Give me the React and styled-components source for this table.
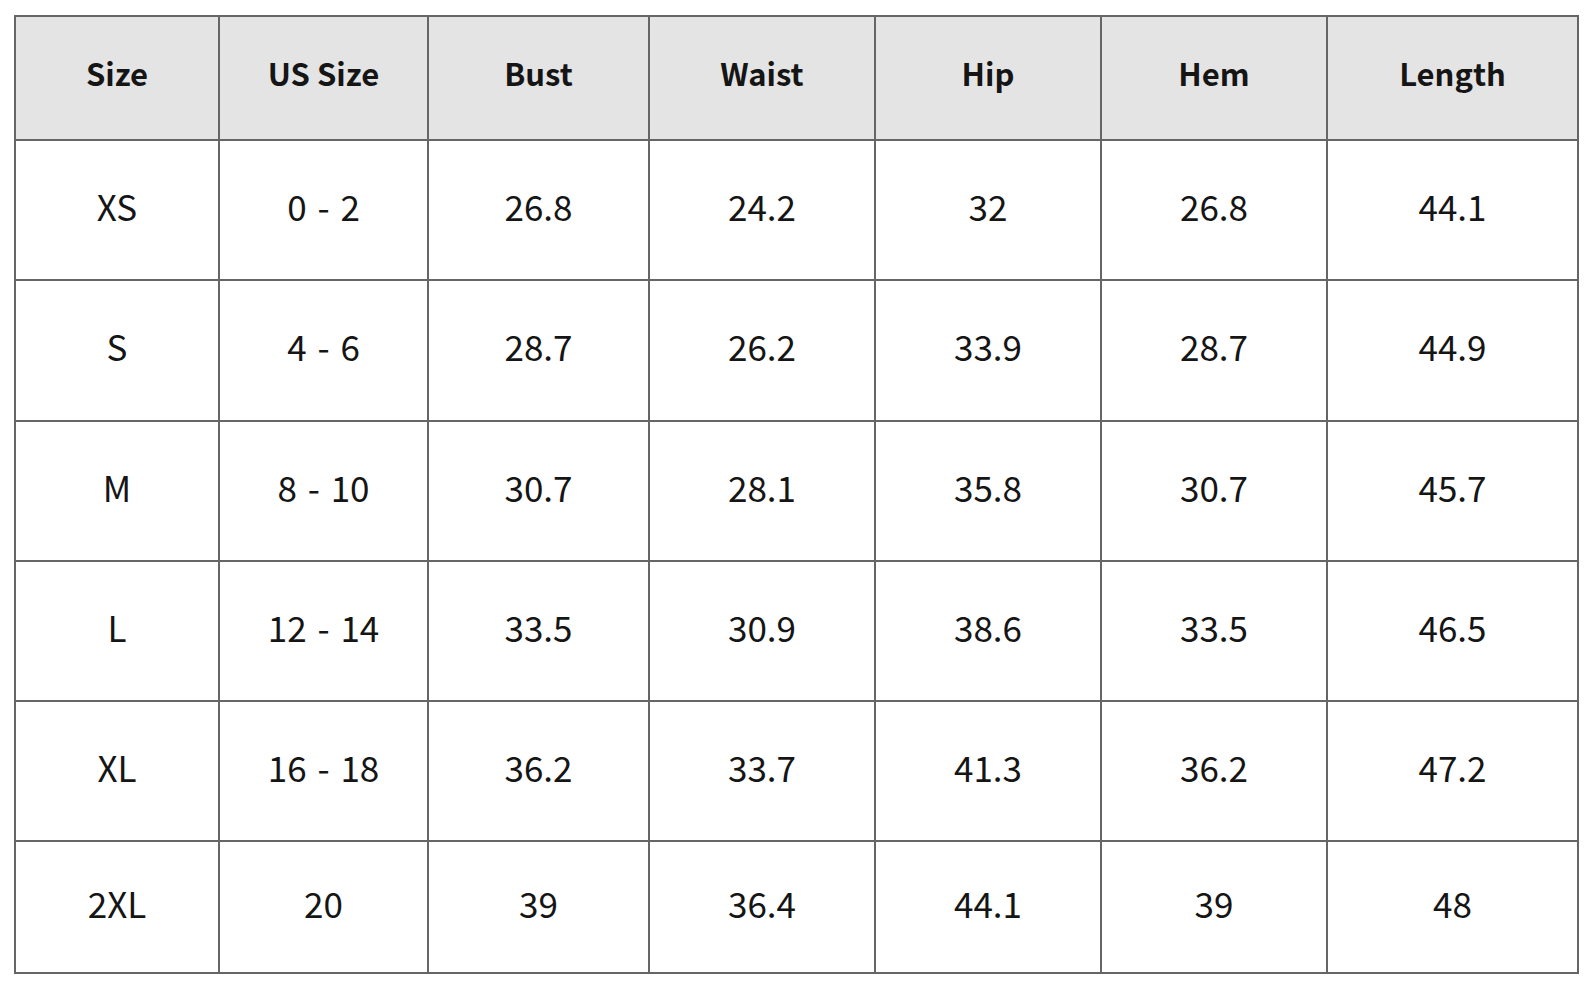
import React from 'react'
import styled, { createGlobalStyle } from 'styled-components'

const GlobalStyle = createGlobalStyle`
  body {
    margin: 0;
    background: #fff;
    font-family: "Noto Sans CJK JP", "Noto Sans", sans-serif;
    color: #151515;
  }
`

const Page = styled.div`
  padding: 15px 0 0 14px;
`

const COLS = [204, 209, 221, 226, 226, 226, 251]
const ROWS = [140, 141, 140, 140, 140, 132]

const Grid = styled.div`
  display: grid;
  grid-template-columns: ${COLS.map((w) => w + 'px').join(' ')};
  grid-template-rows: 124px ${ROWS.map((h) => h + 'px').join(' ')};
  width: max-content;
  border-top: 2px solid #666;
  border-left: 2px solid #666;
`

const Cell = styled.div`
  display: flex;
  align-items: center;
  justify-content: center;
  border-right: 2px solid #666;
  border-bottom: 2px solid #666;
  background: ${(p) => (p.$head ? '#e4e4e4' : '#fff')};
  font-size: ${(p) => (p.$head ? '31px' : '35px')};
  font-weight: ${(p) => (p.$head ? 700 : 400)};
  word-spacing: ${(p) => (p.$head ? '0' : '3px')};
  padding-bottom: ${(p) => (p.$head ? '12px' : '10px')};
`

const headers = ['Size', 'US Size', 'Bust', 'Waist', 'Hip', 'Hem', 'Length']

const rows = [
  ['XS', '0 - 2', '26.8', '24.2', '32', '26.8', '44.1'],
  ['S', '4 - 6', '28.7', '26.2', '33.9', '28.7', '44.9'],
  ['M', '8 - 10', '30.7', '28.1', '35.8', '30.7', '45.7'],
  ['L', '12 - 14', '33.5', '30.9', '38.6', '33.5', '46.5'],
  ['XL', '16 - 18', '36.2', '33.7', '41.3', '36.2', '47.2'],
  ['2XL', '20', '39', '36.4', '44.1', '39', '48']
]

export default function App () {
  return (
    <>
      <GlobalStyle />
      <Page>
        <Grid>
          {headers.map((h) => (
            <Cell key={h} $head>{h}</Cell>
          ))}
          {rows.map((r) =>
            r.map((v, i) => <Cell key={r[0] + i}>{v}</Cell>)
          )}
        </Grid>
      </Page>
    </>
  )
}
